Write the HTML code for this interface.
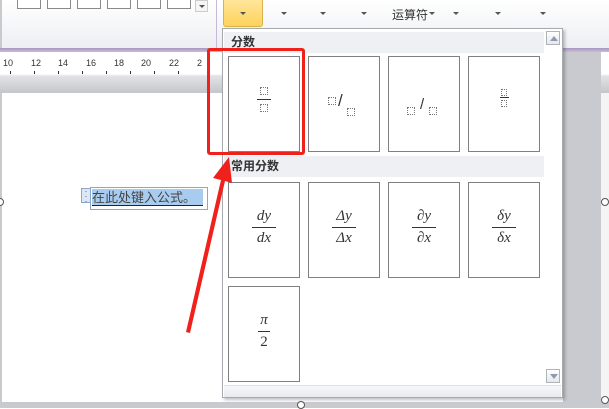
<!DOCTYPE html>
<html><head><meta charset="utf-8"><style>
*{margin:0;padding:0;box-sizing:border-box}
body{width:609px;height:408px;overflow:hidden;position:relative;background:#fff;font-family:"Liberation Sans","Noto Sans CJK SC",sans-serif}
.a{position:absolute}
.tb{position:absolute;top:-1px;height:10px;width:24px;border:1px solid #8a8a8a;border-top:none;background:#fff}
.arr{position:absolute;width:0;height:0;border-left:3px solid transparent;border-right:3px solid transparent;border-top:3px solid #555}
.box{position:absolute;width:72px;background:#fff;border:1px solid #808080}
.hdr{position:absolute;left:1px;width:320px;background:#eef0f4;font-size:12px;font-weight:bold;color:#333;padding-left:7px}
.fr{position:absolute;left:0;right:0;text-align:center;font-family:"Liberation Serif","DejaVu Serif",serif;font-style:italic;font-size:15px;color:#333;line-height:17px}
.fr .l{width:24px;height:1px;background:#333;margin:2px auto}
.dq{display:inline-block;width:8px;height:8px;border:1px dotted #777}
</style></head><body>
<div class="a" style="left:0;top:0;width:609px;height:50px;background:linear-gradient(#fff,#eceef1)"></div>
<div class="a" style="left:0;top:0;width:2px;height:408px;background:#c8cace"></div>
<div class="tb" style="left:17px"></div><div class="tb" style="left:47px"></div><div class="tb" style="left:77px"></div><div class="tb" style="left:107px"></div><div class="tb" style="left:137px"></div><div class="tb" style="left:167px"></div>
<div class="a" style="left:195px;top:0;width:13px;height:12px;border:1px solid #ccc;background:#f5f5f5"></div><div class="arr" style="left:199px;top:5px"></div>
<div class="a" style="left:216px;top:0;width:1px;height:48px;background:#c9b8d9"></div>
<div class="a" style="left:223px;top:0;width:40px;height:27px;background:linear-gradient(#ffe59a,#ffd35a);border:1px solid #d9b24a;border-top:none;border-radius:0 0 3px 3px"></div>
<div class="arr" style="left:240px;top:12px"></div>
<div class="arr" style="left:281px;top:12px"></div>
<div class="arr" style="left:320px;top:12px"></div>
<div class="arr" style="left:361px;top:12px"></div>
<div class="a" style="left:392px;top:6px;font-size:12px;color:#333">运算符</div>
<div class="arr" style="left:429px;top:12px"></div>
<div class="arr" style="left:453px;top:12px"></div>
<div class="arr" style="left:495px;top:12px"></div>
<div class="arr" style="left:540px;top:12px"></div>
<div class="a" style="left:0;top:48px;width:609px;height:4px;background:linear-gradient(#a896c0,#c8bcd6)"></div>
<div class="a" style="left:0;top:52px;width:609px;height:41px;background:linear-gradient(#fff 0,#fff 22px,#e2e3e6 24px,#c4c6ca 41px)"></div>
<div class="a" style="left:0;top:58px;font-size:9px;color:#333;width:230px;height:10px">
<span class="a" style="left:3px">10</span><span class="a" style="left:31px">12</span><span class="a" style="left:58px">14</span><span class="a" style="left:86px">16</span><span class="a" style="left:114px">18</span><span class="a" style="left:141px">20</span><span class="a" style="left:169px">22</span><span class="a" style="left:197px">2</span></div>
<div class="a" style="left:10px;top:71px;width:1px;height:3px;background:#333"></div><div class="a" style="left:34px;top:71px;width:1px;height:3px;background:#333"></div><div class="a" style="left:58px;top:71px;width:1px;height:3px;background:#333"></div><div class="a" style="left:82px;top:71px;width:1px;height:3px;background:#333"></div><div class="a" style="left:106px;top:71px;width:1px;height:3px;background:#333"></div><div class="a" style="left:130px;top:71px;width:1px;height:3px;background:#333"></div><div class="a" style="left:154px;top:71px;width:1px;height:3px;background:#333"></div><div class="a" style="left:178px;top:71px;width:1px;height:3px;background:#333"></div>
<div class="a" style="left:2px;top:93px;width:600px;height:309px;background:#fff"></div>
<div class="a" style="left:563px;top:52px;width:38px;height:356px;background:#c8cacf"></div>
<div class="a" style="left:0;top:402px;width:609px;height:6px;background:#c8cacf"></div>
<div class="a" style="left:601px;top:93px;width:8px;height:309px;background:#f4f4f5"></div>
<div class="a" style="left:601px;top:198px;width:8px;height:8px;border:1px solid #555;border-radius:50%;background:#fff"></div>
<div class="a" style="left:601px;top:396px;width:8px;height:8px;border:1px solid #555;border-radius:50%;background:#fff"></div>
<div class="a" style="left:297px;top:401px;width:8px;height:8px;border:1px solid #555;border-radius:50%;background:#fff"></div>
<div class="a" style="left:-4px;top:198px;width:8px;height:8px;border:1px solid #555;border-radius:50%;background:#fff"></div>
<div class="a" style="left:81px;top:188px;width:10px;height:15px;border:1px solid #8ea6c8;background:#dde6f3;color:#3a6fc4;font-size:9px;line-height:5px;text-align:center">·<br>·<br>·</div>
<div class="a" style="left:90px;top:187px;width:118px;height:23px;border:1px solid #8ea6c8;background:#fff"></div>
<div class="a" style="left:92px;top:189px;width:111px;height:17px;background:#a8ccef;font-size:13px;color:#444;line-height:17px;border-bottom:1px solid #223">在此处键入公式。</div>
<div class="a" style="left:222px;top:28px;width:341px;height:370px;background:#fff;border:1px solid #a7abb0;box-shadow:2px 2px 3px rgba(0,0,0,.25)">
<div class="hdr" style="top:3px;height:21px;line-height:21px">分数</div>
<div class="hdr" style="top:127px;height:21px;line-height:21px">常用分数</div>
<div class="a" style="left:322px;top:0;width:17px;height:356px;background:#fff"></div>
<div class="a" style="left:323px;top:2px;width:14px;height:14px;border:1px solid #b0b4ba;background:linear-gradient(#fff,#e6e8ec)"><div class="a" style="left:3px;top:4px;border-left:4px solid transparent;border-right:4px solid transparent;border-bottom:5px solid #8f9ab0"></div></div>
<div class="a" style="left:323px;top:340px;width:14px;height:14px;border:1px solid #b0b4ba;background:linear-gradient(#fff,#e6e8ec)"><div class="a" style="left:3px;top:4px;border-left:4px solid transparent;border-right:4px solid transparent;border-top:5px solid #8f9ab0"></div></div>
<div class="a" style="left:1px;top:356px;width:337px;height:12px;background:linear-gradient(#f6f7f9,#e8eaee);border-top:1px solid #dde0e4"></div>
</div>
<div class="box" style="left:228px;top:56px;height:96px"><div class="fr" style="top:30px;line-height:8px"><span class="dq"></span><div class="l" style="width:14px;margin:4px auto"></div><span class="dq"></span></div></div>
<div class="box" style="left:308px;top:56px;height:96px"><div class="a" style="left:19px;top:35px"><span class="dq"></span></div><div class="a" style="left:29px;top:35px;font-size:17px;color:#333;line-height:18px">/</div><div class="a" style="left:38px;top:46px"><span class="dq"></span></div></div>
<div class="box" style="left:388px;top:56px;height:96px"><div class="a" style="left:18px;top:45px"><span class="dq"></span></div><div class="a" style="left:31px;top:40px;font-size:15px;color:#333;line-height:16px">/</div><div class="a" style="left:40px;top:45px"><span class="dq"></span></div></div>
<div class="box" style="left:468px;top:56px;height:96px"><div class="fr" style="top:31px;line-height:8px"><span class="dq" style="width:6px;height:7px"></span><div class="l" style="width:9px;margin:1px auto"></div><span class="dq" style="width:6px;height:7px"></span></div></div>
<div class="box" style="left:228px;top:182px;height:96px"><div class="fr" style="top:25px">dy<div class="l"></div>dx</div></div>
<div class="box" style="left:308px;top:182px;height:96px"><div class="fr" style="top:25px">Δy<div class="l"></div>Δx</div></div>
<div class="box" style="left:388px;top:182px;height:96px"><div class="fr" style="top:25px">∂y<div class="l"></div>∂x</div></div>
<div class="box" style="left:468px;top:182px;height:96px"><div class="fr" style="top:25px">δy<div class="l"></div>δx</div></div>
<div class="box" style="left:228px;top:286px;height:96px"><div class="fr" style="top:25px">π<div class="l" style="width:12px"></div><span style="font-style:normal">2</span></div></div>
<div class="a" style="left:207px;top:48px;width:98px;height:107px;border:3px solid #f0201a;border-radius:3px"></div>
<svg class="a" style="left:0;top:0" width="609" height="408"><path d="M186 332 L221 180 L213 178 L229 157 L232 183 L225 181 L190 333 Z" fill="#f0201a"/></svg>
</body></html>
